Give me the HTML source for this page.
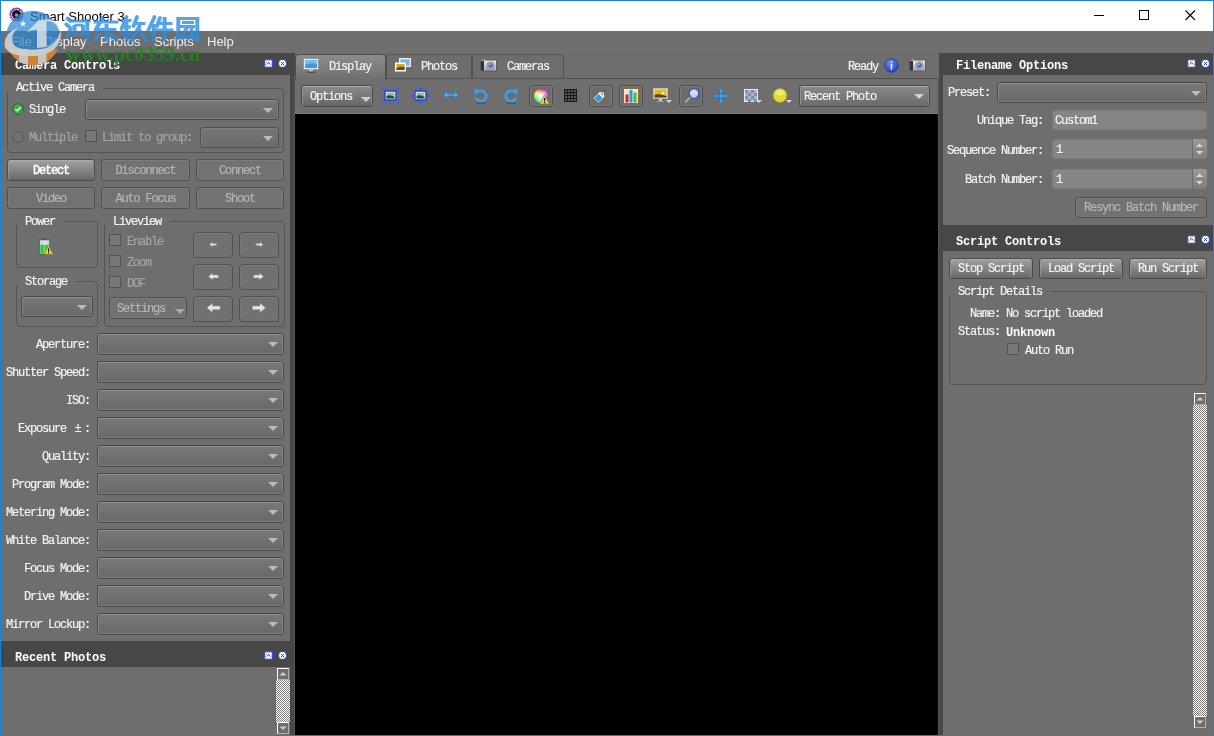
<!DOCTYPE html><html><head><meta charset="utf-8"><style>
*{box-sizing:border-box;margin:0;padding:0}
html,body{width:1214px;height:736px;overflow:hidden;background:#1883d7;position:relative}
div,span,svg{position:absolute}
.t{font:12px "Liberation Mono",monospace;letter-spacing:-1.2px;color:#f2f2f2;white-space:pre;line-height:14px;will-change:transform;margin-top:-1px;-webkit-text-stroke-width:0.2px}
.dis{color:#a4a4a4}
.btn.d .dis{color:#b4b4b4}
.bt{font:bold 12px "Liberation Mono",monospace;letter-spacing:-0.2px;color:#fff;white-space:pre;line-height:14px;will-change:transform}
.r{text-align:right}
.c{text-align:center}
.combo{border:1px solid #4a4a4a;border-radius:3px;background:linear-gradient(#797979,#686868);box-shadow:inset 0 1px 0 #8e8e8e,inset 1px 0 0 #868686,inset -1px 0 0 #808080,inset 0 -1px 0 #7e7e7e}
.combo.d{background:linear-gradient(#747474,#6c6c6c);border-color:#505050;box-shadow:inset 0 1px 0 #808080,inset 1px 0 0 #7c7c7c}
.arr{width:0;height:0;border-left:5px solid transparent;border-right:5px solid transparent;border-top:5px solid #bababa}
.btn{border:1px solid #4a4a4a;border-radius:3px;background:linear-gradient(#a2a2a2,#686868);box-shadow:inset 0 1px 0 #ababab,inset 1px 0 0 #949494,inset -1px 0 0 #858585}
.btn.d{background:#727272;border-color:#505050;box-shadow:inset 0 1px 0 #7c7c7c,inset 1px 0 0 #797979,inset -1px 0 0 #777,inset 0 -1px 0 #777}
.grp{border:1px solid #545454;border-radius:4px}
.gt{background:#6e6e6e}
.chk{border:1px solid #555;background:#767676;width:12px;height:12px}
.sbtn{width:12px;height:12px;border:1px solid;border-color:#fff #b0b0b0 #b0b0b0 #fff;background:#6e6e6e}
.chkr{background:repeating-conic-gradient(#fff 0 25%,#7d7d7d 0 50%) 0 0/2px 2px}
</style></head><body>
<div style="left:1px;top:1px;width:1212px;height:30px;background:#fff"></div>
<div style="left:1px;top:31px;width:1212px;height:22px;background:#6f6f6f"></div>
<div style="left:1px;top:53px;width:1212px;height:682px;background:#6e6e6e"></div>
<div style="left:290px;top:53px;width:4px;height:682px;background:#474747"></div>
<div style="left:294px;top:79px;width:1px;height:656px;background:#555"></div>
<div style="left:939px;top:53px;width:4px;height:682px;background:#474747"></div>
<div style="left:938px;top:79px;width:1px;height:656px;background:#555"></div>
<div style="left:1px;top:53px;width:294px;height:22px;background:#474747"></div>
<div style="left:295px;top:114px;width:643px;height:621px;background:#000"></div>
<div style="left:295px;top:113px;width:643px;height:1px;background:#7a7a7a"></div>
<div style="left:1px;top:53px;width:289px;height:22px;background:#474747"></div>
<div class="bt" style="left:15px;top:59px;">Camera Controls</div>
<svg style="left:264px;top:59px" width="9" height="9" viewBox="0 0 9 9"><rect x="0.6" y="0.6" width="7.8" height="7.8" rx="1.2" fill="#f4f4f4" stroke="#2f4fd0" stroke-width="1.2"/><path d="M2.4 5.5 L4.5 3.4 L6.6 5.5" fill="none" stroke="#2540c0" stroke-width="0.9"/></svg>
<svg style="left:278px;top:59px" width="9" height="9" viewBox="0 0 9 9"><circle cx="4.5" cy="4.5" r="4" fill="#fff" stroke="#2f4fd0" stroke-width="1.1"/><path d="M3 3 L6 6 M6 3 L3 6" stroke="#2540c0" stroke-width="1"/></svg>
<div style="left:7px;top:88px;width:277px;height:65px;border:1px solid #545454;border-radius:4px"></div>
<div style="left:6px;top:86px;width:97px;height:6px;background:#6e6e6e"></div>
<div class="t" style="left:16px;top:82px;">Active Camera</div>
<svg style="left:12px;top:103px" width="12" height="12" viewBox="0 0 12 12"><circle cx="6" cy="6" r="5.3" fill="#2fb83c" stroke="#4a4a4a" stroke-width="1"/><path d="M3.4 6.2 L5.2 7.9 L8.6 4.3" fill="none" stroke="#fff" stroke-width="1.3"/></svg>
<div class="t" style="left:29px;top:104px;">Single</div>
<div class="combo" style="left:85px;top:99px;width:194px;height:21px"><div class="arr" style="right:5px;top:8px"></div></div>
<svg style="left:12px;top:131px" width="12" height="12" viewBox="0 0 12 12"><circle cx="6" cy="6" r="5.3" fill="#717171" stroke="#575757" stroke-width="1"/></svg>
<div class="t dis" style="left:29px;top:132px;">Multiple</div>
<div style="left:85px;top:130px;width:12px;height:12px;border:1px solid #555;background:#777"></div>
<div class="t dis" style="left:102px;top:132px;">Limit to group:</div>
<div class="combo d" style="left:200px;top:127px;width:79px;height:21px"><div class="arr" style="right:5px;top:8px"></div></div>
<div class="btn" style="left:7px;top:159px;width:88px;height:22px"><div class="t c" style="left:0;width:86px;top:5px;-webkit-text-stroke-width:0.45px;color:#fff">Detect</div></div>
<div class="btn d" style="left:101px;top:159px;width:89px;height:22px"><div class="t dis c" style="left:0;width:87px;top:5px">Disconnect</div></div>
<div class="btn d" style="left:196px;top:159px;width:88px;height:22px"><div class="t dis c" style="left:0;width:86px;top:5px">Connect</div></div>
<div class="btn d" style="left:7px;top:187px;width:88px;height:22px"><div class="t dis c" style="left:0;width:86px;top:5px">Video</div></div>
<div class="btn d" style="left:101px;top:187px;width:89px;height:22px"><div class="t dis c" style="left:0;width:87px;top:5px">Auto Focus</div></div>
<div class="btn d" style="left:196px;top:187px;width:88px;height:22px"><div class="t dis c" style="left:0;width:86px;top:5px">Shoot</div></div>
<div style="left:16px;top:221px;width:82px;height:47px;border:1px solid #545454;border-radius:4px"></div>
<div style="left:15px;top:219px;width:49px;height:6px;background:#6e6e6e"></div>
<div class="t" style="left:25px;top:216px;">Power</div>
<svg style="left:38px;top:238px" width="16" height="18" viewBox="0 0 16 18"><rect x="4.5" y="0.6" width="4" height="1.6" fill="#333"/><rect x="1.3" y="1.8" width="10.4" height="14.6" fill="#d0dce8" stroke="#4a5a68" stroke-width="0.9"/><rect x="2.3" y="6.8" width="8.4" height="8.9" fill="#38c838"/><rect x="5.8" y="2.5" width="1.2" height="13" fill="#fff" opacity="0.35"/><path d="M10.5 7.7 L15.2 16.2 L5.8 16.2 Z" fill="#e8d81c" stroke="#8a7a10" stroke-width="0.6"/><rect x="10" y="10.5" width="1.1" height="3" fill="#000"/><rect x="10" y="14.2" width="1.1" height="1.1" fill="#000"/></svg>
<div style="left:16px;top:281px;width:82px;height:46px;border:1px solid #545454;border-radius:4px"></div>
<div style="left:15px;top:279px;width:61px;height:6px;background:#6e6e6e"></div>
<div class="t" style="left:25px;top:276px;">Storage</div>
<div class="combo" style="left:21px;top:296px;width:72px;height:21px"><div class="arr" style="right:5px;top:8px"></div></div>
<div style="left:104px;top:221px;width:181px;height:106px;border:1px solid #545454;border-radius:4px"></div>
<div style="left:103px;top:219px;width:67px;height:6px;background:#6e6e6e"></div>
<div class="t" style="left:113px;top:216px;">Liveview</div>
<div style="left:109px;top:234px;width:12px;height:12px;border:1px solid #555;background:#777"></div>
<div class="t dis" style="left:127px;top:236px;">Enable</div>
<div style="left:109px;top:255px;width:12px;height:12px;border:1px solid #555;background:#777"></div>
<div class="t dis" style="left:127px;top:257px;">Zoom</div>
<div style="left:109px;top:276px;width:12px;height:12px;border:1px solid #555;background:#777"></div>
<div class="t dis" style="left:127px;top:278px;">DOF</div>
<div class="btn d" style="left:109px;top:297px;width:78px;height:22px"><div class="t dis" style="left:7px;top:5px">Settings</div><div class="arr" style="left:65px;top:11px;border-top-color:#a8a8a8"></div></div>
<div style="left:193px;top:232px;width:40px;height:26px;border:1px solid #505050;border-radius:4px;background:#717171;box-shadow:inset 0 1px 0 #7c7c7c,inset 1px 0 0 #797979"></div>
<div style="left:239px;top:232px;width:40px;height:26px;border:1px solid #505050;border-radius:4px;background:#717171;box-shadow:inset 0 1px 0 #7c7c7c,inset 1px 0 0 #797979"></div>
<div style="left:193px;top:264px;width:40px;height:26px;border:1px solid #505050;border-radius:4px;background:#717171;box-shadow:inset 0 1px 0 #7c7c7c,inset 1px 0 0 #797979"></div>
<div style="left:239px;top:264px;width:40px;height:26px;border:1px solid #505050;border-radius:4px;background:#717171;box-shadow:inset 0 1px 0 #7c7c7c,inset 1px 0 0 #797979"></div>
<div style="left:193px;top:296px;width:40px;height:26px;border:1px solid #505050;border-radius:4px;background:#717171;box-shadow:inset 0 1px 0 #7c7c7c,inset 1px 0 0 #797979"></div>
<div style="left:239px;top:296px;width:40px;height:26px;border:1px solid #505050;border-radius:4px;background:#717171;box-shadow:inset 0 1px 0 #7c7c7c,inset 1px 0 0 #797979"></div>
<div class="t r" style="right:1124px;top:339px;">Aperture:</div>
<div class="combo" style="left:97px;top:333px;width:187px;height:22px"><div class="arr" style="right:5px;top:8px"></div></div>
<div class="t r" style="right:1124px;top:367px;">Shutter Speed:</div>
<div class="combo" style="left:97px;top:361px;width:187px;height:22px"><div class="arr" style="right:5px;top:8px"></div></div>
<div class="t r" style="right:1124px;top:395px;">ISO:</div>
<div class="combo" style="left:97px;top:389px;width:187px;height:22px"><div class="arr" style="right:5px;top:8px"></div></div>
<div class="t r" style="right:1124px;top:423px;">Exposure <b style="position:static;display:inline-block;width:12px;text-align:center;font-weight:normal;letter-spacing:0">±</b>:</div>
<div class="combo" style="left:97px;top:417px;width:187px;height:22px"><div class="arr" style="right:5px;top:8px"></div></div>
<div class="t r" style="right:1124px;top:451px;">Quality:</div>
<div class="combo" style="left:97px;top:445px;width:187px;height:22px"><div class="arr" style="right:5px;top:8px"></div></div>
<div class="t r" style="right:1124px;top:479px;">Program Mode:</div>
<div class="combo" style="left:97px;top:473px;width:187px;height:22px"><div class="arr" style="right:5px;top:8px"></div></div>
<div class="t r" style="right:1124px;top:507px;">Metering Mode:</div>
<div class="combo" style="left:97px;top:501px;width:187px;height:22px"><div class="arr" style="right:5px;top:8px"></div></div>
<div class="t r" style="right:1124px;top:535px;">White Balance:</div>
<div class="combo" style="left:97px;top:529px;width:187px;height:22px"><div class="arr" style="right:5px;top:8px"></div></div>
<div class="t r" style="right:1124px;top:563px;">Focus Mode:</div>
<div class="combo" style="left:97px;top:557px;width:187px;height:22px"><div class="arr" style="right:5px;top:8px"></div></div>
<div class="t r" style="right:1124px;top:591px;">Drive Mode:</div>
<div class="combo" style="left:97px;top:585px;width:187px;height:22px"><div class="arr" style="right:5px;top:8px"></div></div>
<div class="t r" style="right:1124px;top:619px;">Mirror Lockup:</div>
<div class="combo" style="left:97px;top:613px;width:187px;height:22px"><div class="arr" style="right:5px;top:8px"></div></div>
<div style="left:1px;top:641px;width:289px;height:26px;background:#474747"></div>
<div class="bt" style="left:15px;top:651px;">Recent Photos</div>
<svg style="left:264px;top:651px" width="9" height="9" viewBox="0 0 9 9"><rect x="0.6" y="0.6" width="7.8" height="7.8" rx="1.2" fill="#f4f4f4" stroke="#2f4fd0" stroke-width="1.2"/><path d="M2.4 5.5 L4.5 3.4 L6.6 5.5" fill="none" stroke="#2540c0" stroke-width="0.9"/></svg>
<svg style="left:278px;top:651px" width="9" height="9" viewBox="0 0 9 9"><circle cx="4.5" cy="4.5" r="4" fill="#fff" stroke="#2f4fd0" stroke-width="1.1"/><path d="M3 3 L6 6 M6 3 L3 6" stroke="#2540c0" stroke-width="1"/></svg>
<div style="left:276px;top:680px;width:14px;height:42px;"></div>
<div class="chkr" style="left:276px;top:680px;width:14px;height:42px"></div>
<div class="sbtn" style="left:277px;top:668px"></div>
<div class="sbtn" style="left:277px;top:722px"></div>
<svg style="left:0;top:0;overflow:visible" width="1" height="1"><g transform="translate(213,244.5) scale(0.5,0.5)"><path d="M-7 0 L-1 -5 L-1 -2 L7 -2 L7 2 L-1 2 L-1 5 Z" fill="#e6e6e6" stroke="#8a8a8a" stroke-width="1.2"/></g></svg>
<svg style="left:0;top:0;overflow:visible" width="1" height="1"><g transform="translate(259.5,244.5) scale(-0.5,0.5)"><path d="M-7 0 L-1 -5 L-1 -2 L7 -2 L7 2 L-1 2 L-1 5 Z" fill="#e6e6e6" stroke="#8a8a8a" stroke-width="1.2"/></g></svg>
<svg style="left:0;top:0;overflow:visible" width="1" height="1"><g transform="translate(213.5,276.5) scale(0.72,0.72)"><path d="M-7 0 L-1 -5 L-1 -2 L7 -2 L7 2 L-1 2 L-1 5 Z" fill="#e6e6e6" stroke="#8a8a8a" stroke-width="0.8333333333333334"/></g></svg>
<svg style="left:0;top:0;overflow:visible" width="1" height="1"><g transform="translate(258.5,276.5) scale(-0.72,0.72)"><path d="M-7 0 L-1 -5 L-1 -2 L7 -2 L7 2 L-1 2 L-1 5 Z" fill="#e6e6e6" stroke="#8a8a8a" stroke-width="0.8333333333333334"/></g></svg>
<svg style="left:0;top:0;overflow:visible" width="1" height="1"><g transform="translate(213.5,307.8) scale(0.95,0.95)"><path d="M-7 0 L-1 -5 L-1 -2 L7 -2 L7 2 L-1 2 L-1 5 Z" fill="#e6e6e6" stroke="#8a8a8a" stroke-width="0.631578947368421"/></g></svg>
<svg style="left:0;top:0;overflow:visible" width="1" height="1"><g transform="translate(259,307.8) scale(-0.95,0.95)"><path d="M-7 0 L-1 -5 L-1 -2 L7 -2 L7 2 L-1 2 L-1 5 Z" fill="#e6e6e6" stroke="#8a8a8a" stroke-width="0.631578947368421"/></g></svg>
<svg style="left:277px;top:668px" width="12" height="12" viewBox="0 0 12 12"><path d="M2.5 7.5 L6 4 L9.5 7.5 Z" fill="#d0d0d0"/></svg>
<svg style="left:277px;top:722px" width="12" height="12" viewBox="0 0 12 12"><path d="M2.5 4.5 L6 8 L9.5 4.5 Z" fill="#d0d0d0"/></svg>
<div style="left:385px;top:78px;width:553px;height:1px;background:#4f4f4f"></div>
<div style="left:295px;top:54px;width:91px;height:26px;border:1px solid #4f4f4f;border-bottom:none;border-radius:4px 4px 0 0;background:linear-gradient(#8c8c8c,#6f6f6f)"></div>
<div style="left:386px;top:54px;width:86px;height:25px;border:1px solid #525252;border-radius:4px 4px 0 0;background:#6d6d6d"></div>
<div style="left:472px;top:54px;width:92px;height:25px;border:1px solid #525252;border-radius:4px 4px 0 0;background:#6d6d6d"></div>
<div class="t" style="left:329px;top:61px;">Display</div>
<div class="t" style="left:421px;top:61px;">Photos</div>
<div class="t" style="left:507px;top:61px;">Cameras</div>
<svg style="left:303px;top:58px" width="16" height="16" viewBox="0 0 16 16"><rect x="0.5" y="0.5" width="15" height="11" fill="#e8e8e8" stroke="#999" stroke-width="1"/><rect x="2" y="2" width="12" height="8" fill="#3a9be0"/><path d="M2 7 Q8 4 14 6 L14 2 L2 2Z" fill="#6cc0f4"/><rect x="6" y="11.5" width="4" height="2" fill="#ccc"/><rect x="4" y="13.5" width="8" height="1.5" fill="#333" opacity="0.6"/></svg>
<svg style="left:395px;top:58px" width="16" height="14" viewBox="0 0 16 14"><rect x="4.5" y="0.5" width="11" height="8" fill="#bcd8f0" stroke="#eee" stroke-width="1"/><rect x="5.5" y="1.5" width="9" height="6" fill="#7ab4e4"/><rect x="0.5" y="5" width="10" height="8" fill="#f0f0f0" stroke="#fff" stroke-width="1"/><rect x="1.5" y="6" width="8" height="6" fill="#d8a818"/><path d="M1.5 10 Q5 8 9.5 9 L9.5 12 L1.5 12Z" fill="#6a4a10"/></svg>
<svg style="left:480px;top:58px" width="17" height="14" viewBox="0 0 17 14"><defs><linearGradient id="cb2" x1="0" y1="0" x2="0" y2="1"><stop offset="0" stop-color="#eeeef2"/><stop offset="1" stop-color="#a8a8b0"/></linearGradient></defs><rect x="2.5" y="0.5" width="3" height="2" fill="#ccc" stroke="#555" stroke-width="0.5"/><rect x="0.5" y="2" width="16" height="11" rx="1" fill="url(#cb2)" stroke="#5a5a5a" stroke-width="1"/><rect x="1" y="3" width="3" height="9.5" fill="#333"/><circle cx="10.5" cy="7.5" r="3.8" fill="#b8b8c0" stroke="#7a7a80" stroke-width="0.7"/><circle cx="10.5" cy="7.5" r="2.2" fill="#3a5ad0"/><circle cx="10" cy="6.8" r="0.8" fill="#cfe0ff"/></svg>
<div class="btn" style="left:301px;top:85px;width:72px;height:22px;background:linear-gradient(#8c8c8c,#666)"><div class="t" style="left:8px;top:5px">Options</div><div class="arr" style="left:59px;top:11px;border-top-color:#d0d0d0"></div></div>
<svg style="left:382px;top:88px" width="17" height="15" viewBox="0 0 17 15"><path d="M0.5 3 V0.5 H3 M14 0.5 H16.5 V3 M16.5 12 V14.5 H14 M3 14.5 H0.5 V12" fill="none" stroke="#3a5ae8" stroke-width="1.2"/><rect x="3" y="3" width="11" height="9" rx="1" fill="#fff" stroke="#2a3ad0" stroke-width="1.4"/><rect x="4.5" y="4.5" width="8" height="6" fill="#8ac0b0"/><path d="M4.5 8 Q8 6 12.5 9 V10.5 H4.5Z" fill="#1a5040"/></svg>
<svg style="left:412px;top:88px" width="17" height="15" viewBox="0 0 17 15"><path d="M8.5 0 V2.5 M8.5 12.5 V15 M0 7.5 H2.5 M14.5 7.5 H17" stroke="#3a5ae8" stroke-width="1.4"/><path d="M6.5 0.5 H10.5 M6.5 14.5 H10.5 M0.5 5.5 V9.5 M16.5 5.5 V9.5" stroke="#3a5ae8" stroke-width="1"/><rect x="3" y="3" width="11" height="9" rx="1" fill="#fff" stroke="#2a3ad0" stroke-width="1.4"/><rect x="4.5" y="4.5" width="8" height="6" fill="#8ac0b0"/><path d="M4.5 8 Q8 6 12.5 9 V10.5 H4.5Z" fill="#1a5040"/></svg>
<svg style="left:443px;top:89px" width="16" height="12" viewBox="0 0 16 12"><path d="M0.5 6 L4.5 2.5 V5 H11.5 V2.5 L15.5 6 L11.5 9.5 V7 H4.5 V9.5 Z" fill="#5ab0f0" stroke="#2a78c0" stroke-width="0.8"/></svg>
<svg style="left:473px;top:88px" width="16" height="16" viewBox="0 0 16 16"><path d="M4 4.5 A5.3 5.3 0 1 1 3 10" fill="none" stroke="#3aa0f0" stroke-width="2.6"/><path d="M1 1 L7 2 L2 7 Z" fill="#3aa0f0"/><ellipse cx="8" cy="15" rx="5" ry="1" fill="#333" opacity="0.4"/></svg>
<svg style="left:503px;top:88px" width="16" height="16" viewBox="0 0 16 16"><path d="M12 4.5 A5.3 5.3 0 1 0 13 10" fill="none" stroke="#3aa0f0" stroke-width="2.6"/><path d="M15 1 L9 2 L14 7 Z" fill="#3aa0f0"/><ellipse cx="8" cy="15" rx="5" ry="1" fill="#333" opacity="0.4"/></svg>
<div style="left:529px;top:85px;width:24px;height:22px;border:1px solid #4e4e4e;border-radius:3px;background:#6c6c6c;box-shadow:inset 0 0 0 1px #7a7a7a"></div>
<div style="left:589px;top:85px;width:24px;height:22px;border:1px solid #4e4e4e;border-radius:3px;background:#6c6c6c;box-shadow:inset 0 0 0 1px #7a7a7a"></div>
<div style="left:619px;top:85px;width:24px;height:22px;border:1px solid #4e4e4e;border-radius:3px;background:#6c6c6c;box-shadow:inset 0 0 0 1px #7a7a7a"></div>
<div style="left:679px;top:85px;width:24px;height:22px;border:1px solid #4e4e4e;border-radius:3px;background:#6c6c6c;box-shadow:inset 0 0 0 1px #7a7a7a"></div>
<div style="left:534px;top:89px;width:14px;height:14px;border-radius:50%;background:conic-gradient(#f02020,#f040f0,#4020e0,#20f0f0,#20e020,#f0f020,#f02020)"></div>
<div style="left:534px;top:89px;width:14px;height:14px;border-radius:50%;background:radial-gradient(circle at 50% 50%,#fff 0,rgba(255,255,255,0.85) 25%,rgba(255,255,255,0) 75%)"></div>
<svg style="left:539px;top:94px" width="11" height="11" viewBox="0 0 11 11"><path d="M5.5 0.8 L10.5 10 L0.5 10 Z" fill="#e8d41c" stroke="#8a7a10" stroke-width="0.6"/><rect x="5" y="4" width="1.2" height="3.2" fill="#000"/><rect x="5" y="8" width="1.2" height="1.2" fill="#000"/></svg>
<svg style="left:564px;top:89px" width="13" height="13" viewBox="0 0 13 13"><rect width="13" height="13" fill="#1a1a1a"/><g fill="#555"><rect x="1" y="1" width="2" height="2"/><rect x="1" y="4" width="2" height="2"/><rect x="1" y="7" width="2" height="2"/><rect x="1" y="10" width="2" height="2"/><rect x="4" y="1" width="2" height="2"/><rect x="4" y="4" width="2" height="2"/><rect x="4" y="7" width="2" height="2"/><rect x="4" y="10" width="2" height="2"/><rect x="7" y="1" width="2" height="2"/><rect x="7" y="4" width="2" height="2"/><rect x="7" y="7" width="2" height="2"/><rect x="7" y="10" width="2" height="2"/><rect x="10" y="1" width="2" height="2"/><rect x="10" y="4" width="2" height="2"/><rect x="10" y="7" width="2" height="2"/><rect x="10" y="10" width="2" height="2"/></g></svg>
<svg style="left:592px;top:87px" width="18" height="18" viewBox="0 0 18 18"><path d="M12.5 5.5 Q14.5 4 13 2.5 Q12 1 14 0.8" fill="none" stroke="#7a5a3a" stroke-width="0.8"/><path d="M1.2 11 L7.5 4.7 L12.3 5 L12.8 9.8 L6.5 16.1 Z" fill="#f6eedc" stroke="#7a5a3a" stroke-width="0.9"/><path d="M2.6 11 L6.5 7.1 L10.4 11 L6.5 14.9 Z" fill="#2a9ae6"/><circle cx="10.3" cy="7.2" r="0.9" fill="#777"/></svg>
<svg style="left:623px;top:88px" width="16" height="16" viewBox="0 0 16 16"><rect x="0.5" y="0.5" width="15" height="15" fill="#f4ecd8" stroke="#8a6a40" stroke-width="1"/><g stroke="#d8c8a8" stroke-width="0.5"><path d="M1 4H15M1 7H15M1 10H15M1 13H15"/></g><rect x="2.5" y="6.5" width="3" height="8" fill="#e02020"/><rect x="6.5" y="2" width="3" height="12.5" fill="#20a0e0"/><rect x="10.5" y="4.5" width="3" height="10" fill="#40c040"/></svg>
<svg style="left:653px;top:88px" width="19" height="16" viewBox="0 0 19 16"><rect x="0.5" y="0.5" width="14" height="10" fill="#eee" stroke="#bbb" stroke-width="1"/><rect x="1.5" y="1.5" width="12" height="8" fill="#e0b818"/><path d="M1.5 7 Q6 5 13.5 8 V9.5 H1.5Z" fill="#5a4010"/><circle cx="10" cy="5" r="1.5" fill="#fff8a0"/><rect x="6" y="11" width="3" height="2" fill="#ccc"/><rect x="4" y="13" width="7" height="1.2" fill="#999"/><path d="M13 12 L19 12 L16 15 Z" fill="#d8d8d8"/></svg>
<svg style="left:684px;top:88px" width="16" height="16" viewBox="0 0 16 16"><path d="M1 14.5 L6.5 9" stroke="#ddd" stroke-width="1.6"/><path d="M1 14.5 L6.5 9" stroke="#333" stroke-width="0.5"/><circle cx="10" cy="5.5" r="4.8" fill="#c8d4e8" stroke="#3050d0" stroke-width="1.3"/><path d="M6 5 Q10 3 14 5" fill="none" stroke="#fff" stroke-width="0.8"/></svg>
<svg style="left:713px;top:88px" width="16" height="16" viewBox="0 0 16 16"><path d="M8 0.5 L10.5 3.5 H9 V7 H12.5 V5.5 L15.5 8 L12.5 10.5 V9 H9 V12.5 H10.5 L8 15.5 L5.5 12.5 H7 V9 H3.5 V10.5 L0.5 8 L3.5 5.5 V7 H7 V3.5 H5.5 Z" fill="#40a8f0" stroke="#2070c0" stroke-width="0.6"/></svg>
<svg style="left:744px;top:89px" width="18" height="15" viewBox="0 0 18 15"><rect x="0.5" y="0.5" width="13" height="12" fill="#a8b4c8" stroke="#e8eef8" stroke-width="1"/><g fill="#8090a8"><rect x="1" y="1" width="3" height="3"/><rect x="1" y="7" width="3" height="3"/><rect x="4" y="4" width="3" height="3"/><rect x="4" y="10" width="3" height="3"/><rect x="7" y="1" width="3" height="3"/><rect x="7" y="7" width="3" height="3"/><rect x="10" y="4" width="3" height="3"/><rect x="10" y="10" width="3" height="3"/></g><path d="M12 11 L18 11 L15 14 Z" fill="#d8d8d8"/></svg>
<svg style="left:772px;top:88px" width="20" height="16" viewBox="0 0 20 16"><circle cx="8" cy="7.5" r="7" fill="#e0d838" stroke="#a89820" stroke-width="1"/><ellipse cx="8" cy="4.5" rx="5" ry="3" fill="#f4f080" opacity="0.8"/><path d="M14 12 L20 12 L17 15 Z" fill="#d8d8d8"/></svg>
<div class="btn" style="left:799px;top:85px;width:131px;height:22px;background:linear-gradient(#8a8a8a,#6a6a6a)"><div class="t" style="left:4px;top:5px">Recent Photo</div><div class="arr" style="left:114px;top:8px;border-top-color:#d0d0d0"></div></div>
<div class="t" style="left:848px;top:61px;">Ready</div>
<svg style="left:884px;top:58px" width="15" height="15" viewBox="0 0 15 15"><defs><radialGradient id="ig" cx="0.4" cy="0.3" r="0.8"><stop offset="0" stop-color="#6a8af0"/><stop offset="1" stop-color="#1a38c0"/></radialGradient></defs><circle cx="7.5" cy="7.5" r="6.8" fill="url(#ig)" stroke="#1a2a90" stroke-width="0.6"/><rect x="6.7" y="3" width="1.6" height="1.6" fill="#fff"/><rect x="6.7" y="5.8" width="1.6" height="5.8" fill="#f4f0d8"/></svg>
<svg style="left:909px;top:58px" width="17" height="14" viewBox="0 0 17 14"><defs><linearGradient id="cb" x1="0" y1="0" x2="0" y2="1"><stop offset="0" stop-color="#eeeef2"/><stop offset="1" stop-color="#a8a8b0"/></linearGradient></defs><rect x="2.5" y="0.5" width="3" height="2" fill="#ccc" stroke="#555" stroke-width="0.5"/><rect x="0.5" y="2" width="16" height="11" rx="1" fill="url(#cb)" stroke="#5a5a5a" stroke-width="1"/><rect x="1" y="3" width="3" height="9.5" fill="#333"/><circle cx="10.5" cy="7.5" r="3.8" fill="#b8b8c0" stroke="#7a7a80" stroke-width="0.7"/><circle cx="10.5" cy="7.5" r="2.2" fill="#3a5ad0"/><circle cx="10" cy="6.8" r="0.8" fill="#cfe0ff"/></svg>
<div style="left:943px;top:53px;width:270px;height:22px;background:#474747"></div>
<div class="bt" style="left:956px;top:59px;">Filename Options</div>
<svg style="left:1187px;top:59px" width="9" height="9" viewBox="0 0 9 9"><rect x="0.6" y="0.6" width="7.8" height="7.8" rx="1.2" fill="#f4f4f4" stroke="#2f4fd0" stroke-width="1.2"/><path d="M2.4 5.5 L4.5 3.4 L6.6 5.5" fill="none" stroke="#2540c0" stroke-width="0.9"/></svg>
<svg style="left:1201px;top:59px" width="9" height="9" viewBox="0 0 9 9"><circle cx="4.5" cy="4.5" r="4" fill="#fff" stroke="#2f4fd0" stroke-width="1.1"/><path d="M3 3 L6 6 M6 3 L3 6" stroke="#2540c0" stroke-width="1"/></svg>
<div class="t" style="left:948px;top:87px;">Preset:</div>
<div class="combo" style="left:997px;top:82px;width:210px;height:21px"><div class="arr" style="right:5px;top:8px"></div></div>
<div class="t r" style="right:171px;top:115px;">Unique Tag:</div>
<div style="left:1052px;top:110px;width:155px;height:20px;border-radius:3px;background:#858585;border:1px solid #7a7a7a"></div>
<div class="t" style="left:1055px;top:115px;">Custom1</div>
<div class="t r" style="right:171px;top:145px;">Sequence Number:</div>
<div style="left:1052px;top:139px;width:155px;height:20px;border-radius:3px;background:#858585;border:1px solid #7a7a7a"></div>
<div class="t" style="left:1056px;top:144px;">1</div>
<div class="t r" style="right:171px;top:174px;">Batch Number:</div>
<div style="left:1052px;top:169px;width:155px;height:20px;border-radius:3px;background:#858585;border:1px solid #7a7a7a"></div>
<div class="t" style="left:1056px;top:174px;">1</div>
<div style="left:1192px;top:139px;width:15px;height:20px;border-left:1px solid #6a6a6a;border-radius:0 3px 3px 0;background:linear-gradient(#9a9a9a,#7e7e7e)"></div>
<svg style="left:1192px;top:139px" width="15" height="20" viewBox="0 0 15 20"><path d="M4 8 L7.5 4.5 L11 8Z" fill="#d8d8d8"/><path d="M4 12 L7.5 15.5 L11 12Z" fill="#d8d8d8"/><path d="M2 10 H13" stroke="#777" stroke-width="0.6"/></svg>
<div style="left:1192px;top:169px;width:15px;height:20px;border-left:1px solid #6a6a6a;border-radius:0 3px 3px 0;background:linear-gradient(#9a9a9a,#7e7e7e)"></div>
<svg style="left:1192px;top:169px" width="15" height="20" viewBox="0 0 15 20"><path d="M4 8 L7.5 4.5 L11 8Z" fill="#d8d8d8"/><path d="M4 12 L7.5 15.5 L11 12Z" fill="#d8d8d8"/><path d="M2 10 H13" stroke="#777" stroke-width="0.6"/></svg>
<div class="btn d" style="left:1075px;top:197px;width:132px;height:21px"><div class="t dis c" style="left:0;width:130px;top:4px">Resync Batch Number</div></div>
<div style="left:943px;top:225px;width:270px;height:26px;background:#474747"></div>
<div class="bt" style="left:956px;top:235px;">Script Controls</div>
<svg style="left:1187px;top:235px" width="9" height="9" viewBox="0 0 9 9"><rect x="0.6" y="0.6" width="7.8" height="7.8" rx="1.2" fill="#f4f4f4" stroke="#2f4fd0" stroke-width="1.2"/><path d="M2.4 5.5 L4.5 3.4 L6.6 5.5" fill="none" stroke="#2540c0" stroke-width="0.9"/></svg>
<svg style="left:1201px;top:235px" width="9" height="9" viewBox="0 0 9 9"><circle cx="4.5" cy="4.5" r="4" fill="#fff" stroke="#2f4fd0" stroke-width="1.1"/><path d="M3 3 L6 6 M6 3 L3 6" stroke="#2540c0" stroke-width="1"/></svg>
<div class="btn" style="left:949px;top:258px;width:84px;height:21px"><div class="t c" style="left:0;width:82px;top:4px">Stop Script</div></div>
<div class="btn" style="left:1039px;top:258px;width:84px;height:21px"><div class="t c" style="left:0;width:82px;top:4px">Load Script</div></div>
<div class="btn" style="left:1129px;top:258px;width:78px;height:21px"><div class="t c" style="left:0;width:76px;top:4px">Run Script</div></div>
<div style="left:949px;top:291px;width:258px;height:94px;border:1px solid #545454;border-radius:4px"></div>
<div style="left:948px;top:289px;width:103px;height:6px;background:#6e6e6e"></div>
<div class="t" style="left:958px;top:286px;">Script Details</div>
<div class="t" style="left:970px;top:308px;">Name:</div>
<div class="t" style="left:1006px;top:308px;">No script loaded</div>
<div class="t" style="left:958px;top:326px;">Status:</div>
<div class="bt" style="left:1006px;top:326px;">Unknown</div>
<div style="left:1007px;top:343px;width:12px;height:12px;border:1px solid #555;background:#777"></div>
<div class="t" style="left:1025px;top:345px;">Auto Run</div>
<div class="chkr" style="left:1193px;top:405px;width:14px;height:311px"></div>
<div class="sbtn" style="left:1194px;top:393px"></div>
<div class="sbtn" style="left:1194px;top:716px"></div>
<svg style="left:1194px;top:393px" width="12" height="12" viewBox="0 0 12 12"><path d="M2.5 7.5 L6 4 L9.5 7.5 Z" fill="#d0d0d0"/></svg>
<svg style="left:1194px;top:716px" width="12" height="12" viewBox="0 0 12 12"><path d="M2.5 4.5 L6 8 L9.5 4.5 Z" fill="#d0d0d0"/></svg>
<svg style="left:9px;top:7px" width="15" height="15" viewBox="0 0 15 15"><circle cx="7.5" cy="7.5" r="7" fill="#7048b0"/><path d="M1 8 A6.5 6.5 0 0 0 5 14 L7.5 7.5Z" fill="#c050c0"/><circle cx="7.5" cy="7.5" r="5" fill="none" stroke="#fff" stroke-width="1" stroke-dasharray="2 1"/><circle cx="7.5" cy="7.5" r="4.2" fill="#111"/><circle cx="7.5" cy="8" r="1.8" fill="#a89070"/></svg>
<div style="left:30px;top:9px;font:13px 'Liberation Sans',sans-serif;color:#000;white-space:pre;line-height:16px;will-change:transform">Smart Shooter 3</div>
<div style="left:1094px;top:15px;width:10px;height:1px;background:#000"></div>
<div style="left:1139px;top:10px;width:10px;height:10px;border:1px solid #000"></div>
<svg style="left:1185px;top:10px" width="11" height="11" viewBox="0 0 11 11"><path d="M0.5 0.5 L10 10 M10 0.5 L0.5 10" stroke="#000" stroke-width="1.1"/></svg>
<div style="left:11px;top:34px;font:13px 'Liberation Sans',sans-serif;color:#f0f0f0;white-space:pre;line-height:16px;will-change:transform">File</div>
<div style="left:44px;top:34px;font:13px 'Liberation Sans',sans-serif;color:#f0f0f0;white-space:pre;line-height:16px;will-change:transform">Display</div>
<div style="left:100px;top:34px;font:13px 'Liberation Sans',sans-serif;color:#f0f0f0;white-space:pre;line-height:16px;will-change:transform">Photos</div>
<div style="left:154px;top:34px;font:13px 'Liberation Sans',sans-serif;color:#f0f0f0;white-space:pre;line-height:16px;will-change:transform">Scripts</div>
<div style="left:207px;top:34px;font:13px 'Liberation Sans',sans-serif;color:#f0f0f0;white-space:pre;line-height:16px;will-change:transform">Help</div>
<svg style="left:0;top:0" width="210" height="70" viewBox="0 0 210 70">
<defs><clipPath id="lc"><circle cx="33" cy="38" r="27.2"/></clipPath></defs>
<g clip-path="url(#lc)">
<rect x="0" y="0" width="70" height="70" fill="#2a86d0" opacity="0.72"/>
<rect x="0" y="49" width="70" height="20" fill="#d8822a" opacity="0.95"/>
<rect x="19" y="49" width="9" height="20" fill="#c4c4c4"/>
<rect x="38" y="49" width="8.5" height="20" fill="#c4c4c4"/>
</g>
<path d="M5,47 C3,38 9,31 19,27 C12,33 10,40 14,45 C20,51 40,52 50,46 C56,42 59,36 61,30 C62,42 56,52 42,55 C26,58 9,56 5,47 Z" fill="#cdcdcd" opacity="0.95"/>
<path d="M27,32 L39,20 L46.5,19.5 L46.5,47 L37,48 L37,29 Z" fill="#f2f2f2" opacity="0.7"/>
<path d="M46.5,20 Q55,20 58.5,27" fill="none" stroke="#eaeaea" stroke-width="2" opacity="0.8"/>
<path d="M23 20.5 L23.9 22.7 L26.2 22.8 L24.4 24.3 L25.1 26.6 L23 25.3 L20.9 26.6 L21.6 24.3 L19.8 22.8 L22.1 22.7Z" fill="#fff"/>
<g fill="none" stroke="#2a8ee6" stroke-linecap="butt" opacity="0.8">
<g stroke-width="2.8">
<path d="M72,21 H90.5 M74.5,25.2 H83.5 M74.5,34.5 H83.5"/>
<path d="M93.5,22 H118.5 M95.5,29.5 H116.5"/>
<path d="M121,20.5 H131.5 M122,27 H131 M120.5,33.8 H132.5 M134,23.5 H145.5"/>
<path d="M157,23.5 H172.5 M154.5,30 H173.5"/>
<path d="M178,18.5 H197.5 M178,37.8 H197.5 M182,22.5 H194 M180,26.5 H195"/>
</g>
<g stroke-width="4">
<path d="M87.3,21 V41.5 M74.5,25 V35.5 M83,25 V35"/>
<path d="M106.5,24 V41.5"/>
<path d="M126.5,21 V41.5"/>
<path d="M153.8,24 V41.5 M164.6,17 V41.5"/>
<path d="M178.3,17 V39.5 M197.3,17 V42"/>
</g>
<g stroke-width="3.8" stroke-linecap="round">
<path d="M67.5,18.5 L70.5,21 M66.3,24.5 L69.5,27 M66.8,37 L71,28.5"/>
<path d="M102.5,18 L95.5,30 M99,34.5 L94.5,40 M110,34.5 L116.5,40"/>
<path d="M126.5,17 L121.5,29 M137,17 L133.5,26 M139.5,26 L131,41 M139.5,30 L146,40.5"/>
<path d="M154.5,17 L148,31 M160,18 L157,26"/>
<path d="M187,27.5 L182.5,36 M191.5,27.5 V35.5 H195"/>
</g>
</g>
<text x="66" y="61" font-family="Liberation Serif" font-weight="bold" font-size="20.5" fill="#218a21" opacity="0.85" textLength="134" lengthAdjust="spacingAndGlyphs">www.pc0359.cn</text>
</svg>
</body></html>
